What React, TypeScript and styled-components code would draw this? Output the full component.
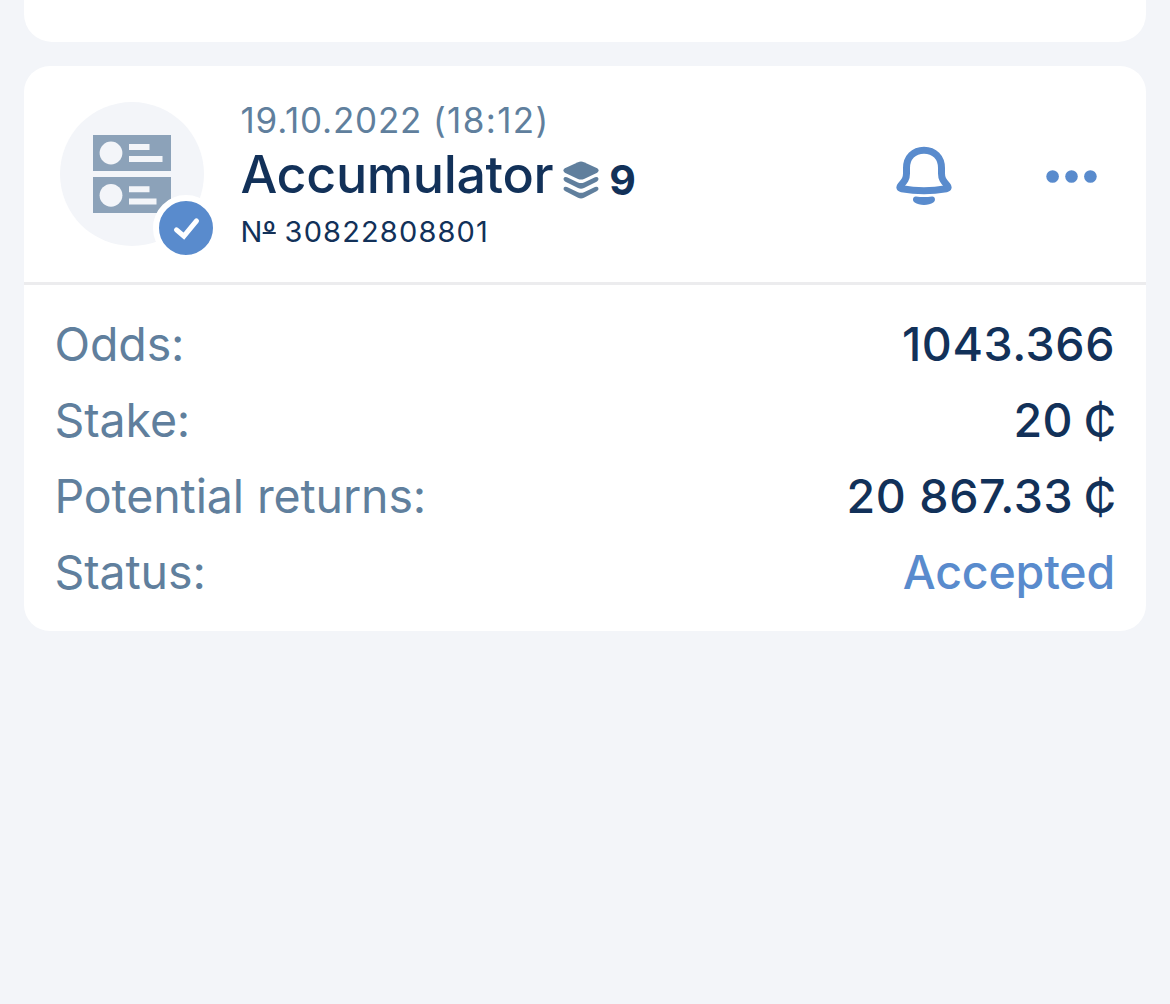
import React from "react"
import styled, { createGlobalStyle } from "styled-components";

type RowType = {
    label: string
    value: string
    currency?: string
    accent?: boolean
}

const rows: RowType[] = [
    { label: "Odds:", value: "1043.366" },
    { label: "Stake:", value: "20", currency: "₵" },
    { label: "Potential returns:", value: "20 867.33", currency: "₵" },
    { label: "Status:", value: "Accepted", accent: true },
]

const GlobalStyle = createGlobalStyle`
    * {
        box-sizing: border-box;
    }
    body {
        margin: 0;
        background: #f3f5f9;
        font-family: Inter, "Liberation Sans", sans-serif;
        color: #123159;
    }
`;

const Page = styled.main`
    height: 1004px;
    padding: 0 24px;
    display: flex;
    flex-direction: column;
    gap: 24px;
    overflow: hidden;
`;

const PreviousCard = styled.div`
    height: 42px;
    flex: none;
    background: #fff;
    border-radius: 0 0 28px 28px;
`;

const BetCard = styled.section`
    background: #fff;
    border-radius: 26px;
`;

const Header = styled.header`
    height: 219px;
    display: flex;
    align-items: flex-start;
    padding: 36px 48px 0 36px;
    border-bottom: 3px solid #ececee;
`;

const Avatar = styled.div`
    position: relative;
    flex: none;
    width: 144px;
    height: 144px;
    display: flex;
    align-items: center;
    justify-content: center;
    border-radius: 50%;
    background: #f3f5f9;
`;

const Badge = styled.span`
    position: absolute;
    right: -15px;
    bottom: -15px;
    width: 66px;
    height: 66px;
    border: 6px solid #fff;
    border-radius: 50%;
    background: #598bcd;
`;

const Info = styled.div`
    flex: 1;
    margin: -4px 0 0 36.5px;
`;

const DateText = styled.div`
    font-size: 35px;
    line-height: 44px;
    letter-spacing: 0.8px;
    color: #607f9d;
`;

const Time = styled.span`
    letter-spacing: 1.4px;
`;

const TitleLine = styled.div`
    display: flex;
    align-items: center;
    height: 64px;
`;

const Title = styled.h1`
    margin: 2px 0 0;
    font-size: 52px;
    line-height: 64px;
    font-weight: 500;
    letter-spacing: -0.35px;
`;

const Count = styled.span`
    font-size: 41px;
    line-height: 64px;
    font-weight: 700;
    margin: 11px 0 0 10px;
`;

const BetNumber = styled.div`
    font-size: 29px;
    line-height: 52px;
    letter-spacing: 1.15px;
`;

const Ordinal = styled.span`
    display: inline-block;
    height: 52px;
    letter-spacing: 0;
    margin: 0 -0.5px 0 -0.8px;
    vertical-align: top;
    text-decoration: underline 2px;
    text-underline-offset: -10px;
    text-decoration-skip-ink: none;
`;

const Actions = styled.div`
    display: flex;
    align-items: center;
    gap: 94px;
    padding-top: 44px;
`;

const IconButton = styled.button`
    display: flex;
    padding: 0;
    border: 0;
    background: none;
    color: #598bcd;
`;

const Details = styled.dl`
    margin: 0;
    padding: 21px 31px 21px 30.5px;
`;

const Row = styled.div`
    display: flex;
    justify-content: space-between;
    height: 76px;
    font-size: 46.5px;
    line-height: 76px;
    white-space: pre;
`;

const Label = styled.dt`
    color: #607f9d;
    letter-spacing: -0.12px;
`;

const Value = styled.dd<{ $accent?: boolean }>`
    margin: 0;
    font-weight: 500;
    color: ${props => (props.$accent ? "#598bcd" : "#123159")};
    letter-spacing: ${props => (props.$accent ? -0.2 : 0.55)}px;
`;

const Currency = styled.span`
    font-size: 44px;
    line-height: 0;
    margin: 0 -1.5px 0 10.5px;
`;

const LayersSvg = styled.svg`
    margin: 11px 0 0 10px;
`;

const CheckSvg = styled.svg`
    display: block;
`;

const AccumulatorIcon: React.FC = () => (
    <svg width="78" height="78" viewBox="0 0 78 78">
        <path fill="#8ca2b9" d="M0 0h78v36H0zM0 42h78v36H0z" />
        <g fill="#f3f5f9">
            <circle cx="18" cy="18" r="11.4" />
            <circle cx="18" cy="60.3" r="11.4" />
            <path d="M36 9h20.5v6H36zM36 21h33.5v6H36zM36 51.3h20.5v6H36zM36 63.5h27.5v6H36z" />
        </g>
    </svg>
)

const CheckIcon: React.FC = () => (
    <CheckSvg width="54" height="54" viewBox="0 0 54 54">
        <path d="M17.5 28.8l7.400 6.400 12.600-15.300" fill="none" stroke="#fff" strokeWidth="5" strokeLinecap="round" strokeLinejoin="miter" />
    </CheckSvg>
)

const LayersIcon: React.FC = () => (
    <LayersSvg width="36" height="38" viewBox="0 0 36 38" fill="#607f9d">
        <path d="M15 1.200q3-1.200 6 0L34.200 7.300q2.800 2.200 0 4.400L21 18q-3 1.200-6 0L1.800 11.700q-2.800-2.200 0-4.400z" />
        <path d="M.6 17.200q1-1.900 3.400-.9l11 5.200q3 1.200 6 0l11-5.200q2.400-1 3.400.9.500 1.900-1.400 3.200L21 27.100q-3 1.200-6 0L2 20.400Q.1 19.100.6 17.200z" />
        <path d="M.6 26.900q1-1.900 3.400-.9l11 5.200q3 1.200 6 0l11-5.200q2.400-1 3.400.9.500 1.900-1.400 3.200L21 36.800q-3 1.200-6 0L2 30.100Q.1 28.800.6 26.900z" />
    </LayersSvg>
)

const BellIcon: React.FC = () => (
    <svg width="56" height="60" viewBox="0 0 56 60">
        <path
            d="M28 4.200C17.500 4.200 10.500 11.500 10.500 22v5.500c0 5-1.700 7.300-5.600 11.700-1.600 1.900-1.400 3.100.9 3.600Q28 46.900 50.200 42.800c2.300-.5 2.500-1.700.9-3.600-3.900-4.400-5.600-6.700-5.600-11.700V22C45.500 11.500 38.500 4.200 28 4.200z"
            fill="none"
            stroke="currentColor"
            strokeWidth="7"
            strokeLinejoin="round"
        />
        <path d="M20 50.500q8 1.200 16 0c3.500-.3 3.900 4.400 1.300 6-4.300 3.300-14.300 3.300-18.600 0-2.600-1.600-2.200-6.300 1.300-6z" fill="currentColor" />
    </svg>
)

const MoreIcon: React.FC = () => (
    <svg width="52" height="14" viewBox="0 0 52 14" fill="currentColor">
        <circle cx="6.600" cy="7.500" r="6.300" />
        <circle cx="25.500" cy="7.500" r="6.300" />
        <circle cx="44.400" cy="7.500" r="6.300" />
    </svg>
)

export default function App() {
    return (
    <>
        <GlobalStyle />
        <Page>
            <PreviousCard />
            <BetCard>
                <Header>
                    <Avatar>
                        <AccumulatorIcon />
                        <Badge>
                            <CheckIcon />
                        </Badge>
                    </Avatar>
                    <Info>
                        <DateText>19.10.2022 <Time>(18:12)</Time></DateText>
                        <TitleLine>
                            <Title>Accumulator</Title>
                            <LayersIcon />
                            <Count>9</Count>
                        </TitleLine>
                        <BetNumber>N<Ordinal>º</Ordinal> 30822808801</BetNumber>
                    </Info>
                    <Actions>
                        <IconButton aria-label="Notifications"><BellIcon /></IconButton>
                        <IconButton aria-label="More"><MoreIcon /></IconButton>
                    </Actions>
                </Header>
                <Details>
                    {rows.map((row) => <Row key={row.label}>
                        <Label>{row.label}</Label>
                        <Value $accent={row.accent}>
                            {row.value}
                            {row.currency && <Currency>{row.currency}</Currency>}
                        </Value>
                    </Row>)}
                </Details>
            </BetCard>
        </Page>
    </>
  )
};
